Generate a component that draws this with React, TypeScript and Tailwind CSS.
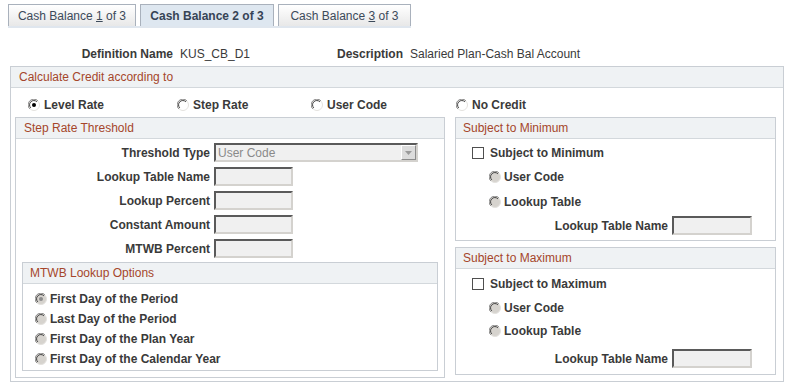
import React from 'react';

const Radio: React.FC<{ checked?: boolean; disabled?: boolean }> = ({ checked, disabled }) => (
    <svg width="12" height="12" viewBox="0 0 12 12" className="flex-none">
        <circle cx="6" cy="6" r="5.5" fill={disabled ? '#d6d3ce' : '#ffffff'} stroke="#e4e2de" />
        <path d="M1.8 9.9 A5.5 5.5 0 0 1 9.9 1.8" stroke="#8a8a8a" strokeWidth="1" fill="none" />
        <path d="M2.8 8.9 A4.3 4.3 0 0 1 8.9 2.8" stroke="#404040" strokeWidth="1" fill="none" />
        {checked && <circle cx="6" cy="6" r="2" fill={disabled ? '#8c8c8c' : '#000000'} />}
    </svg>
);

const Checkbox: React.FC = () => (
    <div className="w-[12px] h-[12px] flex-none bg-white border border-[#4f4f4f]" />
);

const Field: React.FC<{ w?: string }> = ({ w = 'w-[79px]' }) => (
    <div className={`${w} h-[19px] bg-[#f0f0f0] border-t-2 border-l-2 border-b-2 border-r-2 border-t-[#5a5a5a] border-l-[#5a5a5a] border-b-[#d4d2ce] border-r-[#d4d2ce]`} />
);

const Header: React.FC<{ title: string; pad?: string }> = ({ title, pad = 'pl-[8px]' }) => (
    <div className={`h-[21px] ${pad} flex items-center bg-[#eff2f4] border-b border-[#d3d8dc] text-[#a5462b]`}>
        {title}
    </div>
);

const Tab: React.FC<{ active?: boolean; w: string; children: React.ReactNode }> = ({ active, w, children }) => (
    <div
        className={`${w} h-[22px] flex items-center justify-center border border-[#a9b1bc] border-b-0 ${
            active ? 'bg-[#dee7f0] font-bold text-[#364456]' : 'bg-gradient-to-b from-[#ffffff] to-[#e8e8e8] text-[#3c4a5a]'
        }`}
    >
        {children}
    </div>
);

const RadioLabel: React.FC<{ label: string; checked?: boolean; disabled?: boolean; gap?: string }> = ({ label, checked, disabled, gap = 'gap-[4px]' }) => (
    <div className={`flex items-center ${gap} h-[18px]`}>
        <Radio checked={checked} disabled={disabled} />
        <span className="font-bold">{label}</span>
    </div>
);

export default function App() {
    const stepRows = ['Lookup Table Name', 'Lookup Percent', 'Constant Amount', 'MTWB Percent'];

    return (
        <div className="w-[788px] h-[385px] bg-white overflow-hidden font-['Liberation_Sans',Arial,sans-serif] text-[12px] leading-[14px] text-[#3a3a3a]">
            {/* Tabs */}
            <div className="pt-[4px] pl-[8px] flex gap-[4px]">
                <Tab w="w-[128px]">
                    <span>Cash Balance <span className="underline">1</span> of 3</span>
                </Tab>
                <Tab w="w-[134px]" active>
                    <span>Cash Balance 2 of 3</span>
                </Tab>
                <Tab w="w-[133px]">
                    <span>Cash Balance <span className="underline">3</span> of 3</span>
                </Tab>
            </div>
            <div className="ml-[8px] w-[403px] h-[2px] bg-[#dfe6ee]" />

            {/* Definition */}
            <div className="mt-[18px] h-[16px] flex items-center">
                <div className="w-[173px] text-right font-bold">Definition Name</div>
                <div className="w-[160px] pl-[7px]">KUS_CB_D1</div>
                <div className="w-[70px] text-right font-bold">Description</div>
                <div className="pl-[7px]">Salaried Plan-Cash Bal Account</div>
            </div>

            {/* Calculate Credit */}
            <div className="mt-[4px] ml-[10px] w-[774px] border border-[#c9ced4]">
                <Header title="Calculate Credit according to" />
                <div className="h-[29px] pt-[4px] pl-[17px] flex items-center">
                    <div className="w-[149px]"><RadioLabel label="Level Rate" checked /></div>
                    <div className="w-[134px]"><RadioLabel label="Step Rate" /></div>
                    <div className="w-[145px]"><RadioLabel label="User Code" /></div>
                    <RadioLabel label="No Credit" />
                </div>

                <div className="flex gap-[10px] pl-[4px] pb-[3px]">
                    {/* Step Rate Threshold */}
                    <div className="w-[430px] border border-[#c9ced4]">
                        <Header title="Step Rate Threshold" />
                        <div className="pt-[4px] flex flex-col gap-[5px]">
                            <div className="h-[19px] flex items-center">
                                <div className="w-[194px] text-right font-bold">Threshold Type</div>
                                <div className="ml-[4px] w-[204px] h-[19px] flex items-stretch bg-[#f0f0f0] border-t-2 border-l-2 border-b-2 border-r-2 border-t-[#5a5a5a] border-l-[#5a5a5a] border-b-[#d4d2ce] border-r-[#d4d2ce]">
                                    <div className="flex-1 pl-[2px] flex items-center text-[#8a8a8a]">User Code</div>
                                    <div className="w-[15px] flex items-center justify-center bg-[#dcdcdc] border-t border-l border-b border-r border-t-white border-l-white border-b-[#8c8c8c] border-r-[#8c8c8c]">
                                        <svg width="7" height="4" viewBox="0 0 7 4">
                                            <path d="M0 0 L7 0 L3.5 4 Z" fill="#9a9a9a" />
                                        </svg>
                                    </div>
                                </div>
                            </div>
                            {stepRows.map((label) => (
                                <div key={label} className="h-[19px] flex items-center">
                                    <div className="w-[194px] text-right font-bold">{label}</div>
                                    <div className="ml-[4px]"><Field /></div>
                                </div>
                            ))}
                        </div>

                        {/* MTWB Lookup Options */}
                        <div className="mt-[4px] mx-[6px] mb-[6px] border border-[#c9ced4]">
                            <Header title="MTWB Lookup Options" pad="pl-[7px]" />
                            <div className="pt-[5px] pb-[1px] pl-[12px]">
                                {['First Day of the Period', 'Last Day of the Period', 'First Day of the Plan Year', 'First Day of the Calendar Year'].map((label, i) => (
                                    <div key={label} className="h-[20px] flex items-center">
                                        <RadioLabel label={label} checked={i === 0} disabled gap="gap-[3px]" />
                                    </div>
                                ))}
                            </div>
                        </div>
                    </div>

                    {/* Right column */}
                    <div className="w-[321px] flex flex-col">
                        <div className="border border-[#c9ced4]">
                            <Header title="Subject to Minimum" pad="pl-[7px]" />
                            <div className="pt-[5px] pb-[5px]">
                                <div className="pl-[16px] h-[18px] flex items-center gap-[6px]">
                                    <Checkbox />
                                    <span className="font-bold">Subject to Minimum</span>
                                </div>
                                <div className="mt-[6px] pl-[33px]"><RadioLabel label="User Code" disabled gap="gap-[3px]" /></div>
                                <div className="mt-[7px] pl-[33px]"><RadioLabel label="Lookup Table" disabled gap="gap-[3px]" /></div>
                                <div className="mt-[5px] h-[19px] flex items-center">
                                    <div className="w-[212px] text-right font-bold">Lookup Table Name</div>
                                    <div className="ml-[4px]"><Field w="w-[80px]" /></div>
                                </div>
                            </div>
                        </div>

                        <div className="mt-[6px] border border-[#c9ced4]">
                            <Header title="Subject to Maximum" pad="pl-[7px]" />
                            <div className="pt-[6px] pb-[6px]">
                                <div className="pl-[16px] h-[18px] flex items-center gap-[6px]">
                                    <Checkbox />
                                    <span className="font-bold">Subject to Maximum</span>
                                </div>
                                <div className="mt-[6px] pl-[33px]"><RadioLabel label="User Code" disabled gap="gap-[3px]" /></div>
                                <div className="mt-[5px] pl-[33px]"><RadioLabel label="Lookup Table" disabled gap="gap-[3px]" /></div>
                                <div className="mt-[9px] h-[19px] flex items-center">
                                    <div className="w-[212px] text-right font-bold">Lookup Table Name</div>
                                    <div className="ml-[4px]"><Field w="w-[80px]" /></div>
                                </div>
                            </div>
                        </div>
                    </div>
                </div>
            </div>
        </div>
    );
}
